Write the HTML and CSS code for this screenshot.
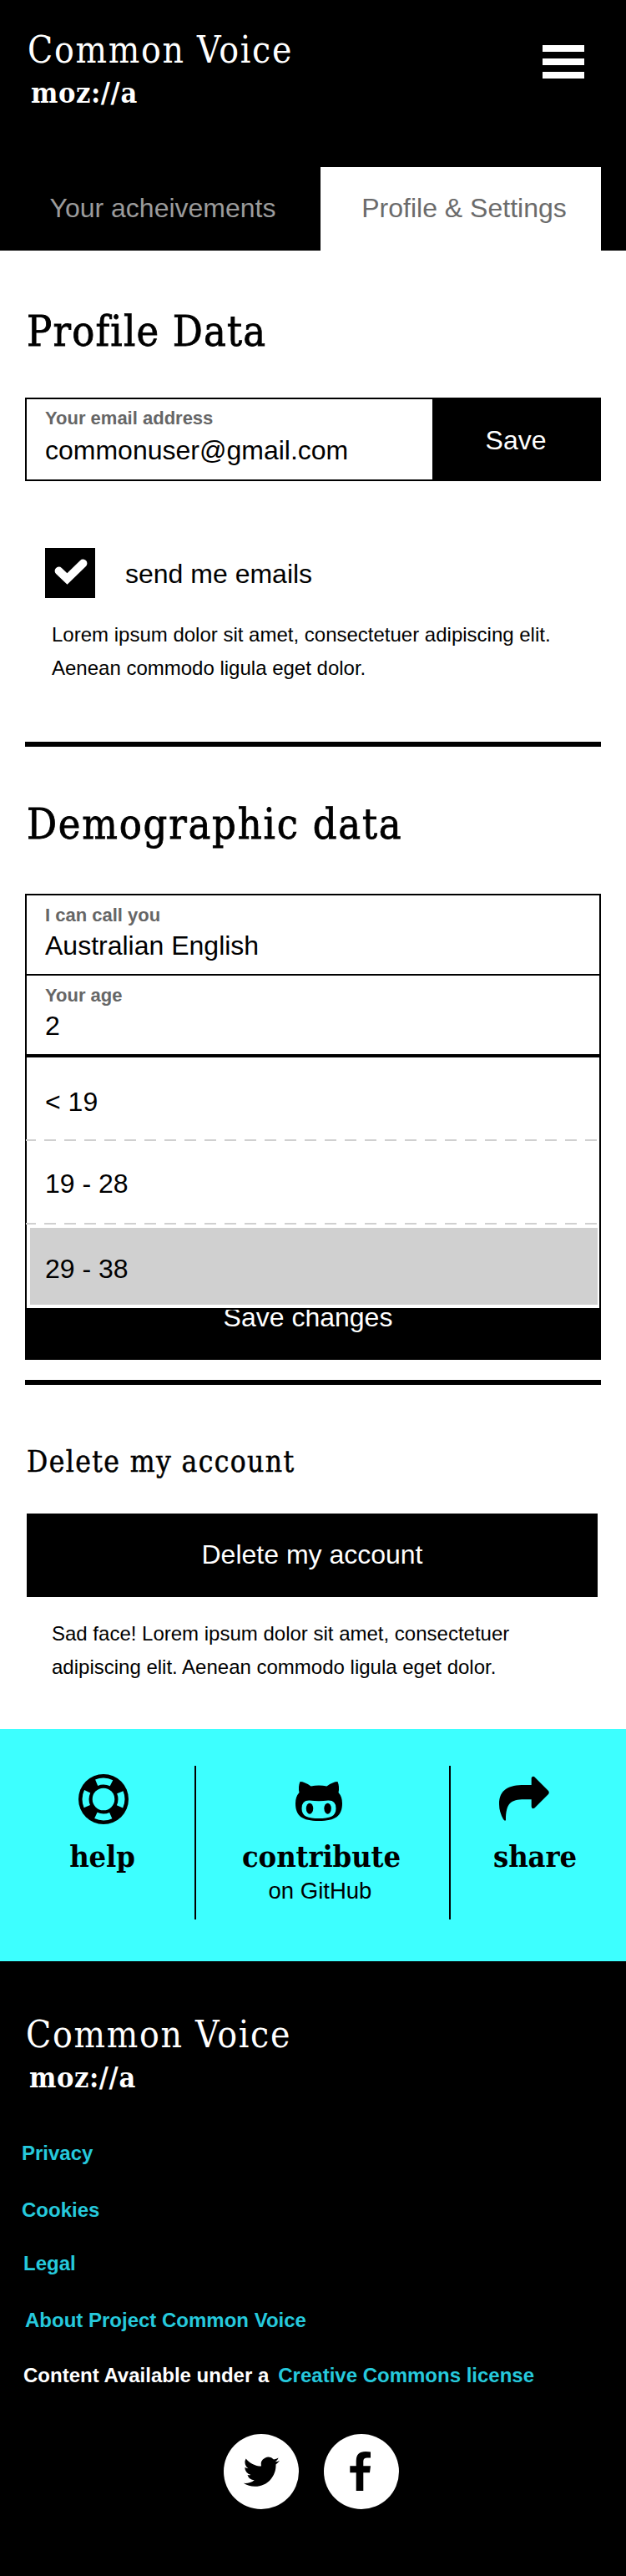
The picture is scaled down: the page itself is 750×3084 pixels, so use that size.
FILE: index.html
```
<!DOCTYPE html>
<html lang="en">
<head>
<meta charset="utf-8">
<title>Common Voice</title>
<link rel="stylesheet" href="styles.css">
</head>
<body>
<header class="header">
  <div class="topbar">
    <div class="brand"><div class="brand-name">Common Voice</div><div class="brand-org">moz://a</div></div>
    <div class="burger"><i></i><i></i><i></i></div>
  </div>
  <nav class="tabs"><a class="tab">Your acheivements</a><a class="tab active">Profile &amp; Settings</a></nav>
</header>
<main class="main">
  <h1 class="title profile-title">Profile Data</h1>
  <div class="email-row">
    <div class="field"><label>Your email address</label><div class="value">commonuser@gmail.com</div></div>
    <button class="save">Save</button>
  </div>
  <div class="check-row">
    <span class="checkbox"><svg width="60" height="60" viewBox="0 0 60 60"><path d="M16.500 27.500L26.500 37L45.500 18.500" fill="none" stroke="#fff" stroke-width="9.800" stroke-linecap="round"/></svg></span>
    <span>send me emails</span>
  </div>
  <p class="copy">Lorem ipsum dolor sit amet, consectetuer adipiscing elit.<br>Aenean commodo ligula eget dolor.</p>
  <hr class="rule">
  <h1 class="title demo-title">Demographic data</h1>
  <div class="form">
    <div class="cell"><label>I can call you</label><div class="value">Australian English</div></div>
    <div class="cell"><label>Your age</label><div class="value">2</div></div>
    <div class="options">
      <div class="option">&lt; 19</div>
      <div class="dash"></div>
      <div class="option second">19 - 28</div>
      <div class="dash"></div>
      <div class="option selected">29 - 38</div>
    </div>
    <button class="submit"><span>Save changes</span></button>
  </div>
  <hr class="rule rule-end">
  <h2 class="title delete-title">Delete my account</h2>
  <button class="delete">Delete my account</button>
  <p class="copy sad">Sad face! Lorem ipsum dolor sit amet, consectetuer<br>adipiscing elit. Aenean commodo ligula eget dolor.</p>
</main>
<section class="actions">
  <a class="action help">
    <svg width="60" height="60" viewBox="0 0 60 60"><circle cx="30" cy="30" r="30"/><circle cx="30" cy="30" r="21.500" fill="none" stroke="#3dffff" stroke-width="8" stroke-dasharray="18.400 15.370" stroke-dashoffset="9.200"/><circle cx="30" cy="30" r="13.300" fill="#3dffff"/></svg>
    <b>help</b>
  </a>
  <a class="action contribute">
    <svg width="56" height="60" viewBox="0 0 56 60"><path fill-rule="evenodd" d="M5.500 9Q11 9 18.500 14.500Q28 12.500 37.500 14.500Q45 9 50.500 9Q53 15 51.500 22Q56 27 56 35C56 50 48 56 28 56S0 50 0 35Q0 27 4.500 22Q3 15 5.500 9ZM17 31.500Q7.500 31 7.500 41C7.500 51 15 53 28 53S48.500 51 48.500 41Q48.500 31 39 31.500Q28 33 17 31.500Z"/><ellipse cx="17" cy="41.200" rx="4.200" ry="6.500"/><ellipse cx="38.600" cy="41.200" rx="4.200" ry="6.500"/></svg>
    <b>contribute</b><small>on GitHub</small>
  </a>
  <a class="action share">
    <svg width="60" height="60" viewBox="0 0 60 60"><path d="M38.700 4.500Q39.500 2 42 3L59 20Q60.500 22 59 24L42.500 40.500Q39.500 42.500 38.700 39V30.300H30C14 30.300 8 35 8 55Q7 57 5 54Q0 45 0 36C0 18 12 13 30 13H38.700Z"/></svg>
    <b>share</b>
  </a>
</section>
<footer class="footer">
  <div class="brand"><div class="brand-name">Common Voice</div><div class="brand-org">moz://a</div></div>
  <ul class="links"><li class="l-privacy">Privacy</li><li class="l-cookies">Cookies</li><li class="l-legal">Legal</li><li class="l-about">About Project Common Voice</li><li class="l-license"><span>Content Available under a</span><a>Creative Commons license</a></li></ul>
  <div class="social">
    <a><svg width="90" height="90" viewBox="0 0 90 90"><circle cx="45" cy="45" r="45" fill="#fff"/><path transform="translate(23.700 23.700) scale(1.800)" d="M23.950 4.570a10 10 0 0 1-2.820.77 4.960 4.960 0 0 0 2.160-2.720c-.95.550-2 .950-3.120 1.180a4.920 4.920 0 0 0-8.380 4.480C7.690 8.100 4.070 6.130 1.640 3.160a4.820 4.820 0 0 0-.670 2.480c0 1.710.870 3.210 2.190 4.100a4.900 4.900 0 0 1-2.230-.620v.060a4.920 4.920 0 0 0 3.950 4.830 5 5 0 0 1-2.210.080 4.940 4.940 0 0 0 4.600 3.420A9.870 9.870 0 0 1 0 19.540a14 14 0 0 0 7.550 2.210c9.050 0 14-7.500 14-13.980 0-.210 0-.420-.020-.630a9.940 9.940 0 0 0 2.460-2.550z"/></svg></a>
    <a><svg width="90" height="90" viewBox="0 0 90 90"><circle cx="45" cy="45" r="45" fill="#fff"/><path d="M56 21.500V28.500H52Q47.300 28.500 47.300 32.500V38.300H56L55 46.200H47.300V68H38.700V46.200H31.300V38.300H38.700V32Q38.700 21 50 21Q54 21 56 21.500Z"/></svg></a>
  </div>
</footer>
</body>
</html>
```
FILE: styles.css
```
* { box-sizing: border-box; }
body { margin: 0; width: 750px; background: #fff; color: #000; font: 32px/40px "Liberation Sans", Arial, sans-serif; }
button { border: 0; padding: 0; margin: 0; background: #000; color: #fff; font: inherit; display: block; }
svg { display: block; }
.header { height: 300px; background: #000; color: #fff; }
.topbar { height: 200px; display: flex; justify-content: space-between; padding: 34px 50px 0 33px; }
.brand { color: #fff; }
.brand-name, .brand-org, .title, .action b { font-family: "DejaVu Serif Condensed", "DejaVu Serif", serif; font-stretch: condensed; white-space: nowrap; }
.brand-name { font-size: 44px; line-height: 52px; letter-spacing: 1.7px; }
.brand-org { font-size: 34px; font-weight: bold; line-height: 44px; letter-spacing: 0.6px; padding: 3px 0 0 4px; }
.burger { display: flex; flex-direction: column; gap: 8px; padding-top: 20px; }
.burger i { width: 50px; height: 8px; background: #fff; }
.tabs { display: flex; height: 100px; padding-left: 6px; line-height: 98px; }
.tab { width: 378px; text-align: center; color: #9b9b9b; }
.tab.active { width: 336px; background: #fff; color: #6b6b6b; padding-left: 8px; }
.main { height: 1770px; padding: 0 30px; }
.title { margin: 0; font-weight: normal; font-size: 50px; line-height: 60px; padding-left: 2px; -webkit-text-stroke: 0.8px #000; }
.profile-title { padding-top: 67px; letter-spacing: 1.2px; }
.email-row { display: flex; height: 100px; margin-top: 49px; border: 2px solid #000; }
.field { width: 486px; padding: 10px 0 0 22px; }
label { display: block; color: #666; font-size: 22px; font-weight: bold; line-height: 26px; }
.field .value { line-height: 40px; margin-top: 5px; }
.save { flex: 1; padding-top: 2px; }
.check-row { display: flex; align-items: center; gap: 36px; margin: 80px 0 0 24px; height: 60px; line-height: 62px; }
.check-row > span:last-child { padding-top: 2px; }
.checkbox { width: 60px; height: 60px; background: #000; }
.copy { margin: 24px 0 0 32px; font-size: 24px; line-height: 40px; white-space: nowrap; }
.rule { border: 0; margin: 68px 0 0; height: 6px; background: #000; }
.demo-title { padding-top: 63px; letter-spacing: 1.8px; }
.form { height: 558px; margin-top: 53px; border: 2px solid #000; border-bottom: 0; }
.cell { height: 96px; border-bottom: 2px solid #000; padding: 11px 0 0 22px; }
.cell .value { line-height: 40px; margin-top: 3px; }
.cell + .cell { height: 98px; border-bottom-width: 4px; }
.options { height: 300px; overflow: hidden; margin-left: -1px; padding-left: 1px; }
.option { height: 98px; padding-left: 22px; line-height: 106px; }
.option.second { line-height: 102px; }
.dash { height: 2px; margin-left: -3px; background: repeating-linear-gradient(90deg, #d0d0d0 0 14px, #fff 14px 24px); }
.option.selected { height: 92px; margin: 4px 2px 4px 4px; padding-left: 18px; background: #d0d0d0; line-height: 98px; }
.submit { width: 100%; height: 60px; margin-top: 2px; overflow: hidden; padding-right: 12px; display: flex; justify-content: center; background: #000; box-shadow: 0 -2px #000; }
.submit span { display: block; line-height: 34px; margin-top: -8px; }
.rule-end { margin-top: 24px; }
.delete-title { font-size: 35px; line-height: 44px; padding-top: 70px; letter-spacing: 1.4px; -webkit-text-stroke-width: 0.5px; }
.delete { width: 684px; height: 100px; margin: 40px 0 0 2px; padding-bottom: 2px; }
.sad { margin-top: 24px; }
.actions { height: 278px; padding-top: 44px; background: #3dffff; display: flex; }
.action { height: 184px; display: flex; flex-direction: column; align-items: center; }
.help { width: 233px; padding: 10px 0 0 14px; }
.help b { padding-right: 2px; }
.contribute { width: 307px; border: solid #000; border-width: 0 2px; padding: 10px 3px 0 0; }
.contribute svg { margin-right: 6px; }
.share { width: 210px; padding: 10px 8px 0 0; }
.share svg { margin-right: 26px; }
.action b { font-size: 36px; line-height: 46px; margin-top: 15px; letter-spacing: -0.1px; }
.action small { font-size: 27.500px; line-height: 38px; padding-right: 3px; }
.footer { height: 736px; background: #000; padding: 62px 28px 0 26px; }
.footer .brand { padding-left: 5px; }
.links { list-style: none; margin: 0; padding: 0; color: #26c9dc; font-size: 24px; font-weight: bold; line-height: 34px; }
.l-privacy { padding-top: 52px; }
.l-cookies { padding-top: 34px; }
.l-legal { padding: 30px 0 0 2px; }
.l-about { padding: 34px 0 0 4px; }
.l-license { display: flex; gap: 11px; color: #fff; padding: 32px 0 0 2px; }
.l-license a { color: #26c9dc; }
.social { display: flex; gap: 30px; margin: 53px 0 0 242px; }
```
